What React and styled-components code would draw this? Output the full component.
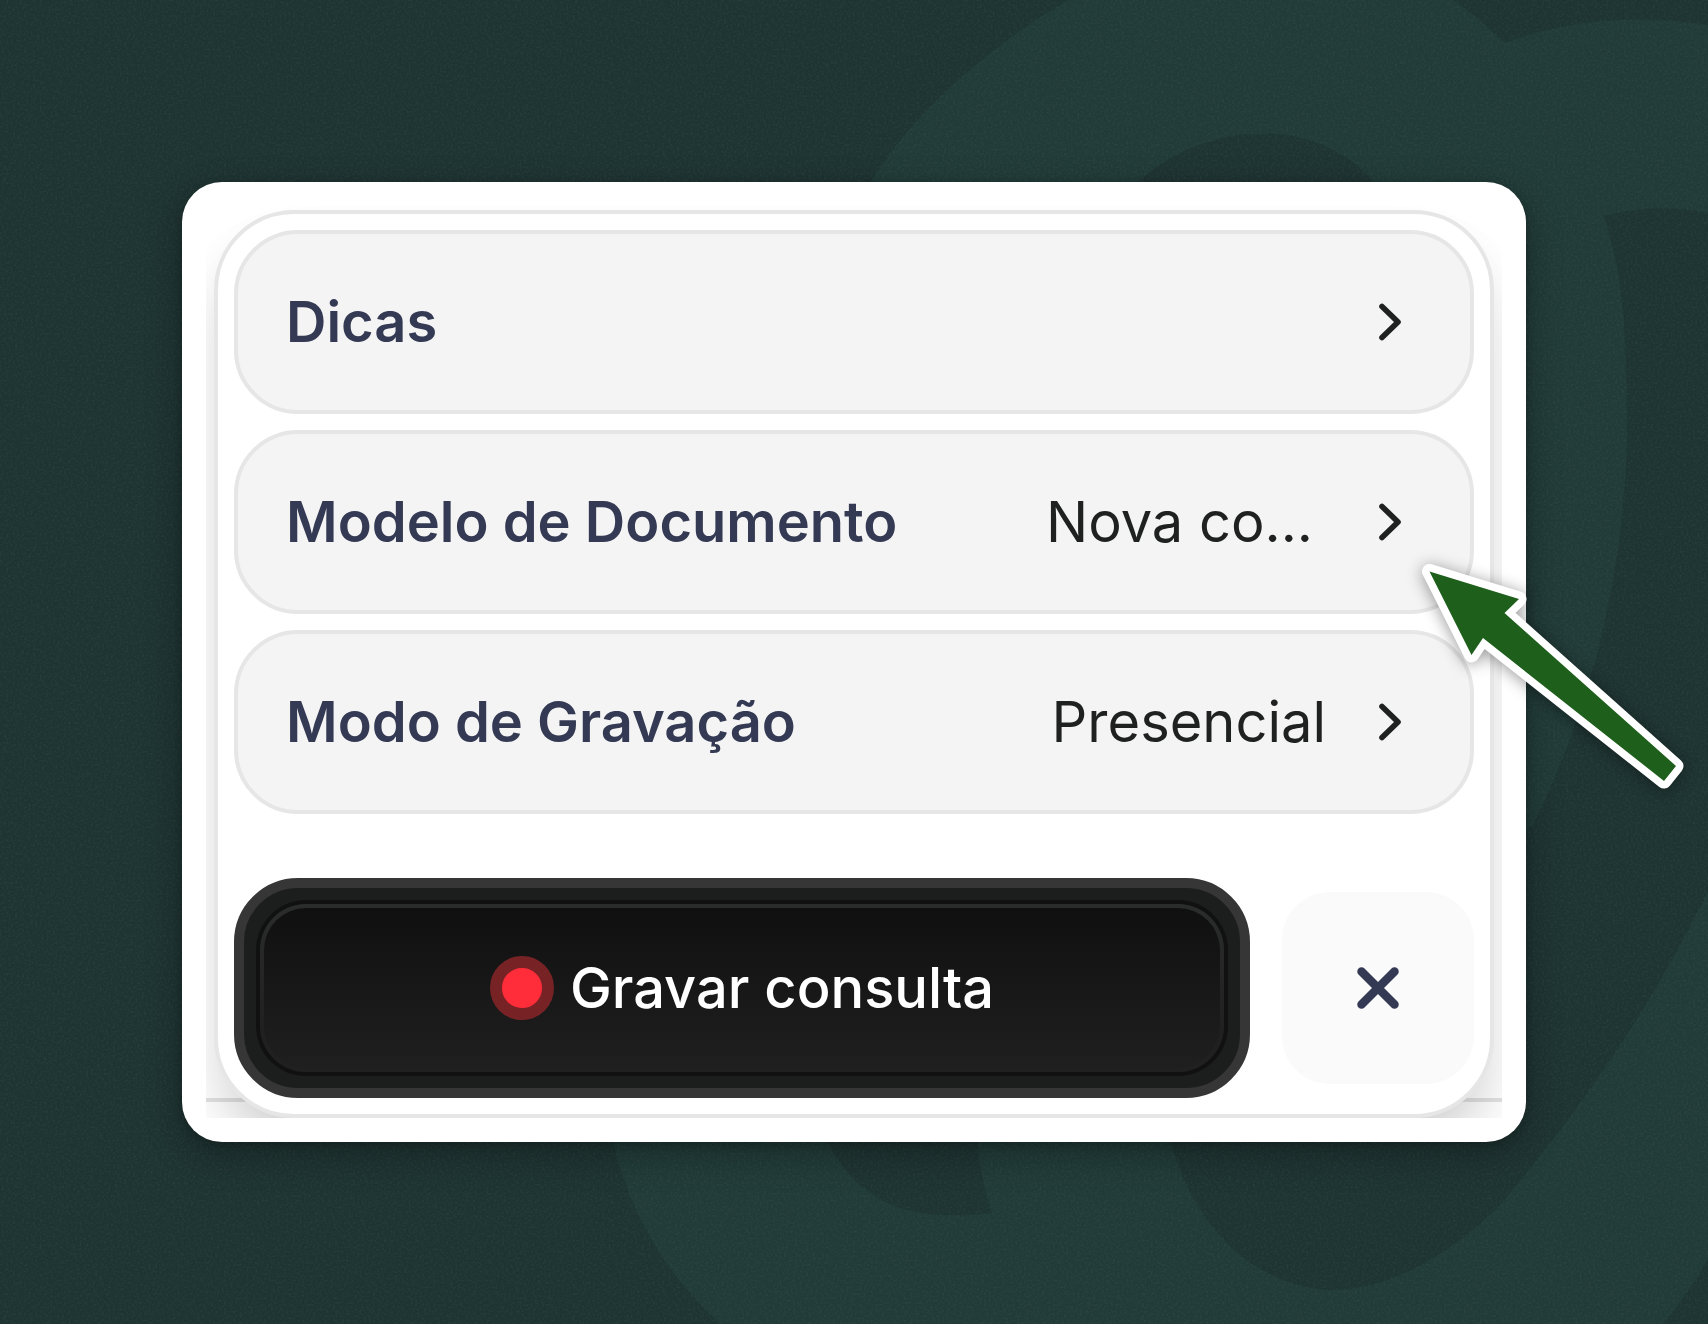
import React from 'react';
import styled, { createGlobalStyle, css } from 'styled-components';

const GlobalStyle = createGlobalStyle`
  * {
    box-sizing: border-box;
  }

  body {
    margin: 0;
    font-family: 'Inter', 'Liberation Sans', sans-serif;
  }
`;

const Page = styled.main`
  position: relative;
  width: 1708px;
  height: 1324px;
  padding: 182px;
  overflow: hidden;
  background: #1e3432;
`;

const Backdrop = styled.svg`
  position: absolute;
  inset: 0;
  width: 100%;
  height: 100%;
`;

const Frame = styled.section`
  position: relative;
  width: 1344px;
  height: 960px;
  padding: 24px;
  border-radius: 40px;
  background: #fff;
  box-shadow: 0 12px 36px rgba(0, 0, 0, 0.3), 0 2px 8px rgba(0, 0, 0, 0.2);
`;

const Stage = styled.div`
  height: 912px;
  padding: 4px 8px 0;
  overflow: hidden;
  background: linear-gradient(#e2e2e2, #e2e2e2) 0 892px / 100% 4px no-repeat, #fff;
`;

const Panel = styled.div`
  display: flex;
  flex-direction: column;
  justify-content: space-between;
  height: 908px;
  padding: 16px;
  border: 4px solid #e6e6e6;
  border-radius: 80px;
  background: #fff;
  box-shadow: 0 40px 60px -12px rgba(0, 0, 0, 0.16), 0 20px 40px rgba(0, 0, 0, 0.04);
`;

const Options = styled.div`
  display: flex;
  flex-direction: column;
  gap: 16px;
`;

const Option = styled.button`
  display: flex;
  align-items: center;
  width: 100%;
  height: 184px;
  padding: 0 68px 0 48px;
  border: 4px solid #e6e6e6;
  border-radius: 64px;
  background: #f4f4f4;
  color: #1f2120;
  font: 400 56px/80px 'Inter', 'Liberation Sans', sans-serif;
  text-align: left;
  cursor: pointer;
`;

const Label = styled.span`
  flex: 1;
  color: #343a53;
  font-weight: 600;
`;

const Value = styled.span`
  margin-right: ${({ $gap }) => $gap}px;
`;

const Chevron = styled.svg`
  width: 24px;
  height: 40px;
`;

const Actions = styled.div`
  display: flex;
  align-items: center;
  justify-content: space-between;
`;

const pressable = css`
  display: flex;
  align-items: center;
  justify-content: center;
  border: none;
  cursor: pointer;
`;

const RecordShell = styled.div`
  width: 1016px;
  height: 220px;
  padding: 16px;
  border: 10px solid #363636;
  border-radius: 64px;
  background: #1c1e1d;
`;

// The transparent border lets the highlight show along the top and fade down the sides
const RecordButton = styled.button`
  ${pressable}
  gap: 16px;
  width: 100%;
  height: 100%;
  padding: 0;
  border: 4px solid transparent;
  border-radius: 46px;
  background: linear-gradient(#101010, #1f1f1f) padding-box,
    linear-gradient(#2b2d2c, #1f201f 75%) border-box;
  box-shadow: 0 0 0 4px #111;
  color: #fff;
  font: 500 56px/80px 'Inter', 'Liberation Sans', sans-serif;
`;

const RecordDot = styled.span`
  width: 64px;
  height: 64px;
  border: 12px solid #772326;
  border-radius: 50%;
  background: #ff2c39;
`;

const CloseButton = styled.button`
  ${pressable}
  width: 192px;
  height: 192px;
  padding: 0;
  border-radius: 48px;
  background: #fafafa;
  color: #343a53;
`;

// Pointer laid over the panel and the backdrop
const Arrow = styled.svg`
  position: absolute;
  left: 1400px;
  top: 540px;
  width: 308px;
  height: 270px;
  filter: drop-shadow(0 2px 8px rgba(0, 0, 0, 0.4));
`;

const options = [
  { label: 'Dicas' },
  { label: 'Modelo de Documento', value: 'Nova co...', gap: 65 },
  { label: 'Modo de Gravação', value: 'Presencial', gap: 52 },
];

const App = () => {
  return (
    <Page>
      <GlobalStyle />
      <Backdrop viewBox="0 0 1708 1324">
        <defs>
          <filter id="grain" x="0" y="0" width="100%" height="100%">
            <feTurbulence type="fractalNoise" baseFrequency="0.45" numOctaves="2" seed="4" />
            <feColorMatrix values="0 0 0 0 0.5  0 0 0 0 0.6  0 0 0 0 0.58  1.2 0 0 0 -0.5" />
          </filter>
        </defs>
        <path
          fill="#213b38"
          fillRule="evenodd"
          d="M1069 0C990 45 910 115 871 182L780 500L600 900C590 1000 600 1080 613 1142C630 1215 670 1280 721 1324H1663Q1688 1294 1708 1259V891C1650 1010 1580 1110 1500 1205C1455 1250 1395 1290 1329 1290C1245 1285 1190 1215 1171 1142L1180 1000L1533 825C1595 700 1627 560 1627 420C1627 330 1622 270 1604 216Q1655 202 1708 213V25Q1600 8 1504 43Q1480 18 1453 0Z
             M1138 182C1205 120 1320 115 1373 182V500H1100Z
             M827 1142C855 1190 890 1225 992 1213Q981 1180 977 1142V1000H800Z"
        />
        <rect width="1708" height="1324" filter="url(#grain)" opacity="0.12" />
      </Backdrop>

      <Frame>
        <Stage>
          <Panel>
            <Options>
              {options.map(({ label, value, gap }) => (
                <Option key={label} type="button">
                  <Label>{label}</Label>
                  {value && <Value $gap={gap}>{value}</Value>}
                  <Chevron viewBox="0 0 24 40" fill="none" stroke="currentColor" strokeWidth="5.600" strokeLinecap="round" strokeLinejoin="round">
                    <path d="M4 4.500L20 20L4 35.500" />
                  </Chevron>
                </Option>
              ))}
            </Options>
            <Actions>
              <RecordShell>
                <RecordButton type="button">
                  <RecordDot />
                  Gravar consulta
                </RecordButton>
              </RecordShell>
              <CloseButton type="button" aria-label="Fechar">
                <svg width="48" height="48" viewBox="0 0 48 48" stroke="currentColor" strokeWidth="8.500" strokeLinecap="round">
                  <path d="M7.500 7.500L40.500 40.500M40.500 7.500L7.500 40.500" />
                </svg>
              </CloseButton>
            </Actions>
          </Panel>
        </Stage>
      </Frame>

      <Arrow viewBox="1400 540 308 270">
        <path
          d="M1429.500 571.500L1519 599L1504.500 613L1676 766L1664 781L1483 638L1471.500 655Z"
          fill="#1d5f1b"
          stroke="#fff"
          strokeWidth="15"
          strokeLinejoin="round"
          paintOrder="stroke"
        />
      </Arrow>
    </Page>
  );
};

export default App;
